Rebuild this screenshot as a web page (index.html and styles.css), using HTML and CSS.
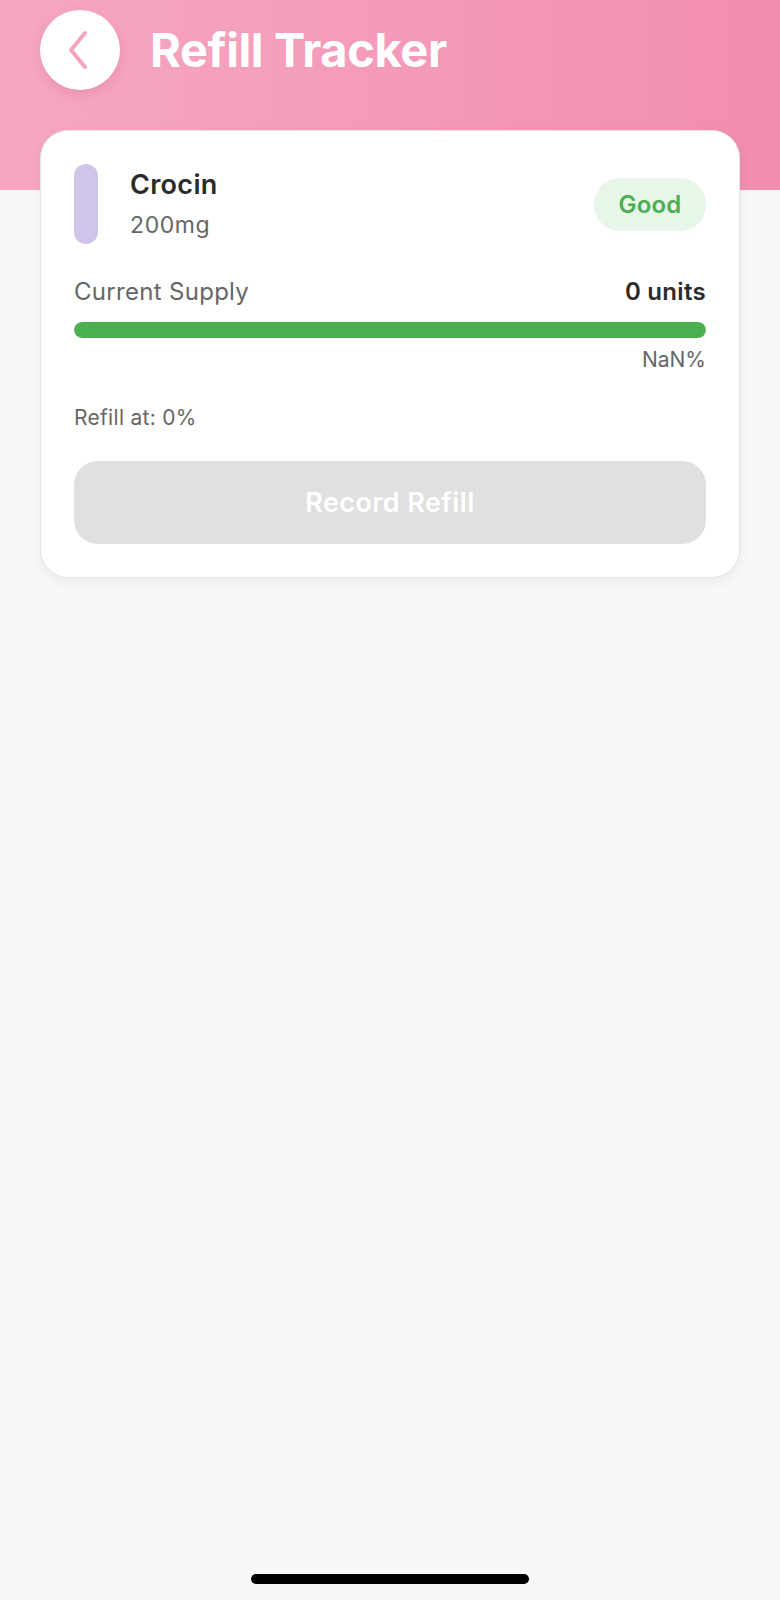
FILE: index.html
```html
<!DOCTYPE html>
<html>
<head>
<meta charset="utf-8">
<link rel="stylesheet" href="styles.css">
</head>
<body>
<div class="screen">
  <header class="header">
    <div class="header-row">
      <button class="back-btn" aria-label="Back">
        <svg width="26" height="40" viewBox="0 0 26 40"><path d="M20 3 L6 20 L20 37" fill="none" stroke="#f5a3c0" stroke-width="4" stroke-linecap="round" stroke-linejoin="round"/></svg>
      </button>
      <h1 class="title">Refill Tracker</h1>
    </div>
  </header>
  <main class="content">
    <section class="card">
      <div class="med-row">
        <div class="pill"></div>
        <div class="med-info">
          <div class="med-name">Crocin</div>
          <div class="med-dose">200mg</div>
        </div>
        <div class="badge">Good</div>
      </div>
      <div class="supply-row">
        <span class="supply-label">Current Supply</span>
        <span class="supply-value">0 units</span>
      </div>
      <div class="bar"><div class="bar-fill"></div></div>
      <div class="percent">NaN%</div>
      <div class="refill-at">Refill at: 0%</div>
      <button class="record-btn">Record Refill</button>
    </section>
  </main>
  <div class="home-indicator"></div>
</div>
</body>
</html>
```

FILE: styles.css
```css
* { box-sizing: border-box; }
html, body { margin: 0; padding: 0; }
body {
  background: #f8f8fa;
  font-family: Inter, "Noto Sans", sans-serif;
  color: #333;
}
.screen {
  min-height: 1600px;
}
.header {
  height: 190px;
  padding: 10px 40px 0 40px;
  background: linear-gradient(90deg, #f6a8c3 0%, #f28dae 100%);
}
.header-row {
  display: flex;
  align-items: center;
  gap: 30px;
}
.back-btn {
  width: 80px;
  height: 80px;
  border-radius: 50%;
  border: none;
  background: #fff;
  box-shadow: 0 4px 12px rgba(200, 80, 120, 0.25);
  display: flex;
  align-items: center;
  justify-content: center;
  padding: 0 4px 0 0;
}
.title {
  margin: 0;
  color: #fff;
  font-family: Inter, "Noto Sans", sans-serif;
  font-weight: 700;
  font-size: 47px;
  line-height: 60px;
  letter-spacing: -0.4px;
}
.content {
  padding: 0 40px;
  margin-top: -60px;
}
.card {
  background: #fff;
  border: 1px solid #e4e4e6;
  border-radius: 28px;
  padding: 33px;
  box-shadow: 0 4px 14px rgba(0, 0, 0, 0.06);
}
.med-row {
  display: flex;
  align-items: center;
}
.pill {
  width: 24px;
  height: 80px;
  border-radius: 12px;
  background: #d1c4e9;
  margin-right: 32px;
  flex: none;
}
.med-info {
  flex: 1;
  display: flex;
  flex-direction: column;
  gap: 8px;
}
.med-name {
  font-size: 27px;
  line-height: 34px;
  font-weight: 600;
  letter-spacing: 0.3px;
  color: #2b2b2b;
}
.med-dose {
  font-size: 23px;
  line-height: 30px;
  letter-spacing: 0.6px;
  color: #666;
}
.badge {
  width: 112px;
  height: 53px;
  border-radius: 26px;
  background: #e8f5e9;
  color: #4caf50;
  font-size: 24px;
  font-weight: 600;
  letter-spacing: 0.2px;
  display: flex;
  align-items: center;
  justify-content: center;
}
.supply-row {
  display: flex;
  justify-content: space-between;
  margin-top: 32px;
  font-size: 24px;
  line-height: 32px;
  letter-spacing: 0.3px;
}
.supply-label { color: #666; }
.supply-value { color: #2b2b2b; font-weight: 600; }
.bar {
  margin-top: 14px;
  height: 16px;
  border-radius: 8px;
  background: #eee;
  overflow: hidden;
}
.bar-fill {
  width: 100%;
  height: 100%;
  background: #4caf50;
  border-radius: 8px;
}
.percent {
  margin-top: 8px;
  text-align: right;
  font-size: 21px;
  line-height: 28px;
  color: #666;
}
.refill-at {
  margin-top: 30px;
  font-size: 21px;
  line-height: 28px;
  letter-spacing: 0.3px;
  color: #666;
}
.record-btn {
  display: block;
  width: 100%;
  margin-top: 29px;
  height: 83px;
  border: none;
  border-radius: 24px;
  background: #e0e0e0;
  color: #fff;
  font-family: Inter, "Noto Sans", sans-serif;
  font-size: 27px;
  font-weight: 600;
  letter-spacing: 0.4px;
}
.home-indicator {
  position: fixed;
  left: 251px;
  bottom: 16px;
  width: 278px;
  height: 10px;
  border-radius: 5px;
  background: #000;
}
```
